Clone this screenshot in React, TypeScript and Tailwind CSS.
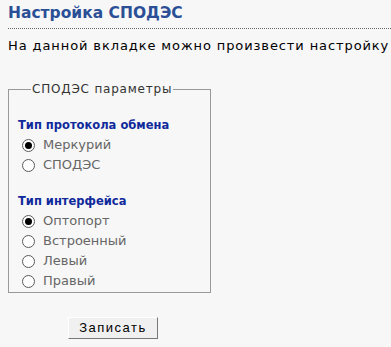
import { useState } from "react";

const font = "font-['DejaVu_Sans',Verdana,sans-serif]";

function Radio({
  label,
  checked,
  onSelect,
}: {
  label: string;
  checked: boolean;
  onSelect: () => void;
}) {
  return (
    <label className="flex h-5 cursor-pointer items-center pl-[4px]" onClick={onSelect}>
      <span className="flex size-[13px] items-center justify-center rounded-full border border-[#5a5a5a] bg-white">
        {checked && <span className="size-[7px] rounded-full bg-black" />}
      </span>
      <span className="ml-[8px] text-[13px] text-[#666]">{label}</span>
    </label>
  );
}

export default function App() {
  const [protocol, setProtocol] = useState("Меркурий");
  const [iface, setIface] = useState("Оптопорт");

  return (
    <div className={`h-[347px] w-[391px] overflow-hidden bg-[#f7f7f7] pl-2 ${font}`}>
      <h1 className="border-b border-dotted border-[#666] pt-[4px] pb-[5px] text-[15.5px] leading-[19px] font-bold text-[#2b4f96]">
        Настройка СПОДЭС
      </h1>
      <p className="mt-[9px] text-[13px] leading-4 tracking-[0.9px] whitespace-nowrap text-black">
        На данной вкладке можно произвести настройку
      </p>

      <fieldset className="mt-[27px] w-[203px] border border-[#999] pr-2 pb-[1px] pl-[9px]">
        <legend className="ml-[13px] px-[1px] text-[12px] leading-4 tracking-[0.8px] text-[#333]">
          СПОДЭС параметры
        </legend>

        <div className="mt-[19px] h-[19px] text-[11.5px] leading-[19px] font-bold text-[#102a9c]">
          Тип протокола обмена
        </div>
        {["Меркурий", "СПОДЭС"].map((p) => (
          <Radio key={p} label={p} checked={protocol === p} onSelect={() => setProtocol(p)} />
        ))}

        <div className="mt-[17px] h-[19px] text-[11.5px] leading-[19px] font-bold text-[#102a9c]">
          Тип интерфейса
        </div>
        {["Оптопорт", "Встроенный", "Левый", "Правый"].map((p) => (
          <Radio key={p} label={p} checked={iface === p} onSelect={() => setIface(p)} />
        ))}
      </fieldset>

      <button className="mt-[24px] ml-[60px] h-[22px] w-[90px] border border-t-[#fff] border-r-[#777] border-b-[#777] border-l-[#fff] bg-[#f0f0f0] font-['Liberation_Sans',Arial,sans-serif] text-[13px] tracking-[1.5px] text-black">
        Записать
      </button>
    </div>
  );
}
